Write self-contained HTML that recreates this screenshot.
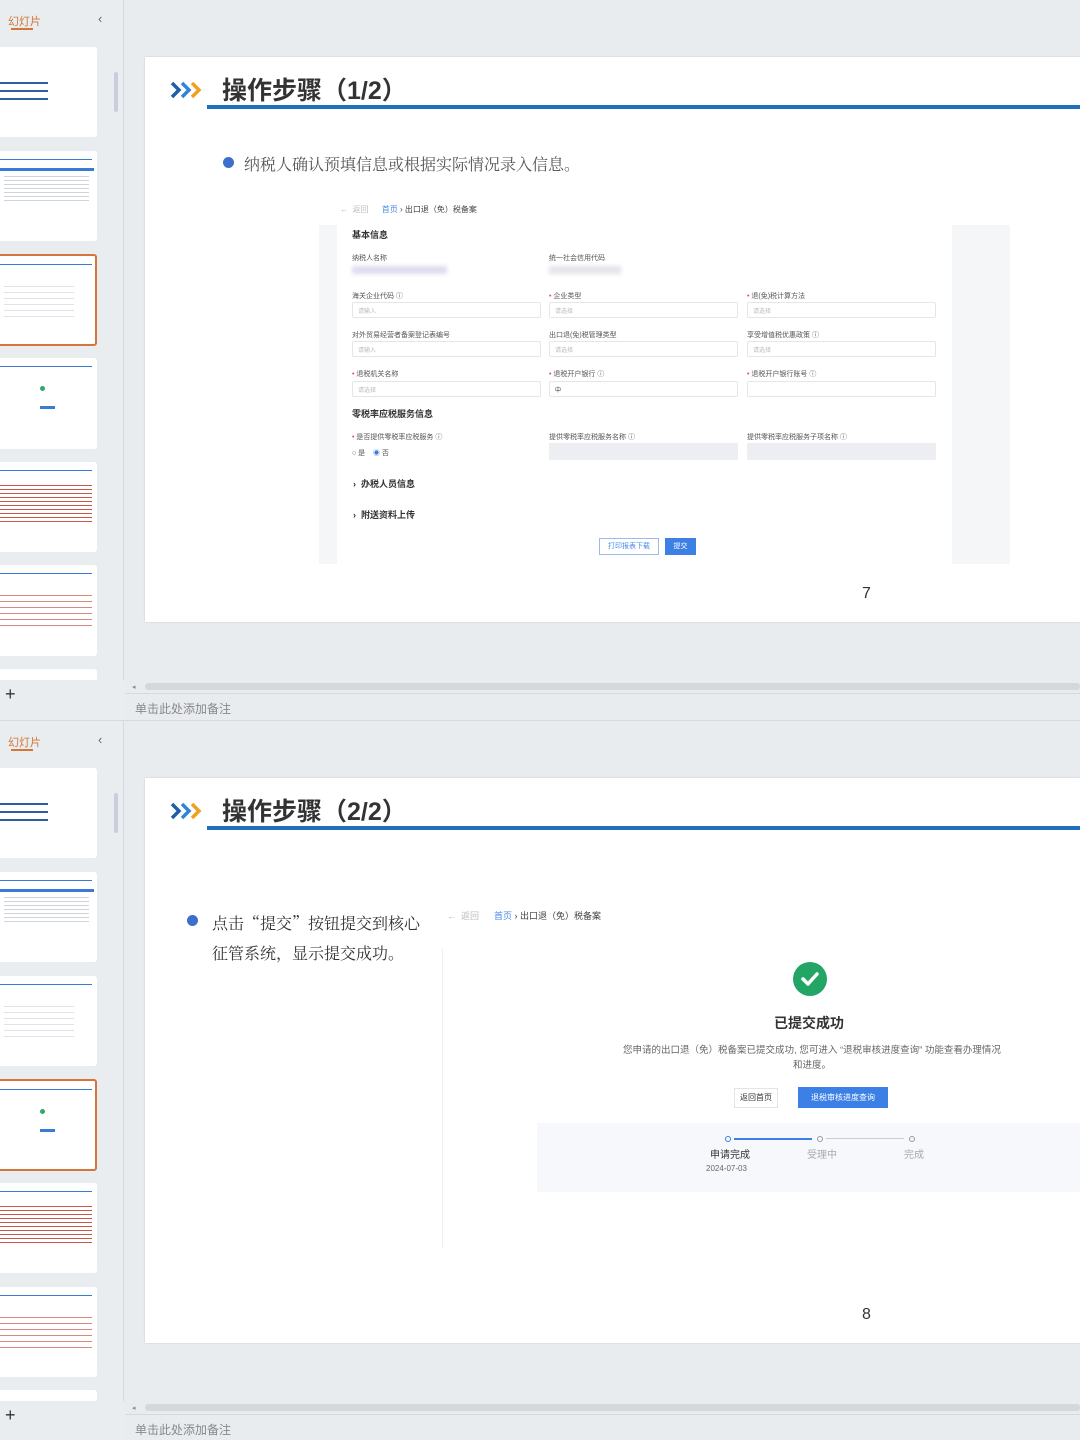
<!DOCTYPE html><html><head><meta charset="utf-8"><style>
*{margin:0;padding:0;box-sizing:border-box}
body{width:1080px;height:1440px;overflow:hidden;background:#e9ecef;font-family:"Liberation Sans","Noto Sans CJK SC",sans-serif;position:relative}
.a{position:absolute}
.pan{position:absolute;left:0;width:1080px;height:720px;overflow:hidden;background:#e9ecef}
.side{left:0;top:0;width:124px;height:720px;background:#e9edf0;border-right:1px solid #d6dadf}
.th{left:0;width:97px;background:#fff;border-radius:0 3px 3px 0}
.sel{border:2px solid #d4763a;border-left:none}
.slide{left:145px;top:57px;width:935px;height:565px;background:#fff;box-shadow:0 0 2px rgba(0,0,0,.15)}
.t{font-size:25px;font-weight:bold;color:#333;letter-spacing:0}
.bar{left:62px;top:48px;width:873px;height:4px;background:#1f6fbd}
.lbl{font-size:7px;color:#555}
.inp{height:16px;border:1px solid #e4e6ea;border-radius:2px;font-size:6px;color:#bbb;padding:3px 5px}
.g{font-size:12px;color:#888}
</style></head><body>

<!-- PANEL 1 -->
<div class="pan" style="top:0">
 <div class="a side">
  <div class="a" style="left:8px;top:13px;font-size:11px;color:#d4763a">幻灯片</div>
  <div class="a" style="left:11px;top:28px;width:22px;height:2px;background:#d4763a"></div>
  <div class="a" style="left:98px;top:11px;font-size:13px;color:#666">‹</div>
  <div class="a" style="left:114px;top:72px;width:4px;height:40px;background:#ccd;border-radius:2px"></div>
  <div class="a th" style="top:47px;height:90px"><div class="a" style="left:0;top:32px;width:48px;height:24px;background:repeating-linear-gradient(#fff 0 3px,#2e5f9a 3px 5px,#fff 5px 8px)"></div></div>
  <div class="a th" style="top:151px;height:90px"><div class="a" style="left:0;top:8px;width:92px;height:1px;background:#3a7bd5"></div><div class="a" style="left:0;top:17px;width:94px;height:3px;background:#3a7bd5"></div><div class="a" style="left:4px;top:22px;width:85px;height:30px;background:repeating-linear-gradient(#fff 0 3px,#d0d5dc 3px 4px)"></div></div>
  <div class="a th sel" style="top:254px;height:92px"><div class="a" style="left:0;top:8px;width:92px;height:1px;background:#3a7bd5"></div><div class="a" style="left:4px;top:25px;width:70px;height:40px;background:repeating-linear-gradient(#fff 0 5px,#e0e3e8 5px 6px)"></div></div>
  <div class="a th" style="top:358px;height:91px"><div class="a" style="left:0;top:8px;width:92px;height:1px;background:#3a7bd5"></div><div class="a" style="left:40px;top:28px;width:5px;height:5px;border-radius:50%;background:#2eaa6a"></div><div class="a" style="left:40px;top:48px;width:15px;height:3px;background:#3a7bd5"></div></div>
  <div class="a th" style="top:462px;height:90px"><div class="a" style="left:0;top:8px;width:92px;height:1px;background:#3a7bd5"></div><div class="a" style="left:0;top:20px;width:92px;height:40px;background:repeating-linear-gradient(#fff 0 3px,#c75a4a 3px 4px)"></div></div>
  <div class="a th" style="top:565px;height:91px"><div class="a" style="left:0;top:8px;width:92px;height:1px;background:#3a7bd5"></div><div class="a" style="left:0;top:25px;width:92px;height:40px;background:repeating-linear-gradient(#fff 0 5px,#d98a80 5px 6px)"></div></div>
  <div class="a th" style="top:669px;height:12px"></div>
  <div class="a" style="left:0;top:680px;width:124px;height:40px;background:#e9edf0"></div>
  <div class="a" style="left:5px;top:684px;font-size:18px;color:#333">+</div>
 </div>
 <div class="a slide">
  <svg class="a" style="left:25px;top:23px" width="36" height="20"><path d="M2 3l7 7-7 7" stroke="#1f5fa8" stroke-width="3.5" fill="none"/><path d="M12 3l7 7-7 7" stroke="#2f86d6" stroke-width="3.5" fill="none"/><path d="M22 3l7 7-7 7" stroke="#f0a020" stroke-width="3.5" fill="none"/></svg>
  <div class="a t" style="left:77px;top:14px">操作步骤（1/2）</div>
  <div class="a bar"></div>
  <div class="a" style="left:78px;top:100px;width:11px;height:11px;border-radius:50%;background:#3c6fcd"></div>
  <div class="a" style="left:99px;top:95px;font-size:16px;color:#555;font-family:'Noto Serif CJK SC',serif">纳税人确认预填信息或根据实际情况录入信息。</div>
  <div class="a" style="left:195px;top:147px;font-size:8px;color:#bbb">←&nbsp; 返回 &nbsp;&nbsp;&nbsp;&nbsp; <span style="color:#4a8ae8">首页</span> <span style="color:#444">› 出口退（免）税备案</span></div>
  <div class="a" style="left:174px;top:168px;width:691px;height:339px;background:#f5f6f8"></div>
  <div class="a" style="left:192px;top:168px;width:615px;height:339px;background:#fff"></div>
  <div class="a" style="left:207px;top:171px;font-size:9px;font-weight:bold;color:#333">基本信息</div>
  <div class="a lbl" style="left:207px;top:196px">纳税人名称</div><div class="a lbl" style="left:404px;top:196px">统一社会信用代码</div>
  <div class="a" style="left:207px;top:209px;width:95px;height:8px;background:#dde;filter:blur(2px)"></div>
  <div class="a" style="left:404px;top:209px;width:72px;height:8px;background:#e4e4ea;filter:blur(2px)"></div>
  <div class="a lbl" style="left:207px;top:234px">海关企业代码 ⓘ</div><div class="a lbl" style="left:404px;top:234px"><span style="color:#e44">•</span> 企业类型</div><div class="a lbl" style="left:602px;top:234px"><span style="color:#e44">•</span> 退(免)税计算方法</div>
  <div class="a inp" style="left:207px;top:245px;width:189px">请输入</div><div class="a inp" style="left:404px;top:245px;width:189px">请选择</div><div class="a inp" style="left:602px;top:245px;width:189px">请选择</div>
  <div class="a lbl" style="left:207px;top:273px">对外贸易经营者备案登记表编号</div><div class="a lbl" style="left:404px;top:273px">出口退(免)税管理类型</div><div class="a lbl" style="left:602px;top:273px">享受增值税优惠政策 ⓘ</div>
  <div class="a inp" style="left:207px;top:284px;width:189px">请输入</div><div class="a inp" style="left:404px;top:284px;width:189px">请选择</div><div class="a inp" style="left:602px;top:284px;width:189px">请选择</div>
  <div class="a lbl" style="left:207px;top:312px"><span style="color:#e44">•</span> 退税机关名称</div><div class="a lbl" style="left:404px;top:312px"><span style="color:#e44">•</span> 退税开户银行 ⓘ</div><div class="a lbl" style="left:602px;top:312px"><span style="color:#e44">•</span> 退税开户银行账号 ⓘ</div>
  <div class="a inp" style="left:207px;top:324px;width:189px">请选择</div><div class="a inp" style="left:404px;top:324px;width:189px;color:#333">中</div><div class="a inp" style="left:602px;top:324px;width:189px"></div>
  <div class="a" style="left:207px;top:350px;font-size:9px;font-weight:bold;color:#333">零税率应税服务信息</div>
  <div class="a lbl" style="left:207px;top:375px"><span style="color:#e44">•</span> 是否提供零税率应税服务 ⓘ</div><div class="a lbl" style="left:404px;top:375px">提供零税率应税服务名称 ⓘ</div><div class="a lbl" style="left:602px;top:375px">提供零税率应税服务子项名称 ⓘ</div>
  <div class="a lbl" style="left:207px;top:391px">○ 是 &nbsp;&nbsp; <span style="color:#3a7bd5">◉</span> 否</div>
  <div class="a" style="left:404px;top:386px;width:189px;height:17px;background:#eceef1"></div><div class="a" style="left:602px;top:386px;width:189px;height:17px;background:#eceef1"></div>
  <div class="a" style="left:208px;top:420px;font-size:9px;font-weight:bold;color:#333">› &nbsp;办税人员信息</div>
  <div class="a" style="left:208px;top:451px;font-size:9px;font-weight:bold;color:#333">› &nbsp;附送资料上传</div>
  <div class="a" style="left:454px;top:481px;width:60px;height:17px;border:1px solid #9bbbe8;font-size:7px;color:#4a8ae8;text-align:center;line-height:15px">打印报表下载</div>
  <div class="a" style="left:520px;top:481px;width:31px;height:17px;background:#3c80e6;font-size:7px;color:#fff;text-align:center;line-height:17px">提交</div>
  <div class="a" style="left:717px;top:528px;font-size:16px;color:#333">7</div>
 </div>
 <div class="a" style="left:132px;top:683px;font-size:7px;color:#888">◂</div>
 <div class="a" style="left:145px;top:683px;width:935px;height:7px;background:#d4d8dd;border-radius:3px"></div>
 <div class="a" style="left:125px;top:693px;width:955px;height:1px;background:#d6dadf"></div>
 <div class="a g" style="left:135px;top:700px">单击此处添加备注</div>
</div>

<!-- PANEL 2 -->
<div class="pan" style="top:720px;border-top:1px solid #d6dadf">
 <div class="a side">
  <div class="a" style="left:8px;top:13px;font-size:11px;color:#d4763a">幻灯片</div>
  <div class="a" style="left:11px;top:28px;width:22px;height:2px;background:#d4763a"></div>
  <div class="a" style="left:98px;top:11px;font-size:13px;color:#666">‹</div>
  <div class="a" style="left:114px;top:72px;width:4px;height:40px;background:#ccd;border-radius:2px"></div>
  <div class="a th" style="top:47px;height:90px"><div class="a" style="left:0;top:32px;width:48px;height:24px;background:repeating-linear-gradient(#fff 0 3px,#2e5f9a 3px 5px,#fff 5px 8px)"></div></div>
  <div class="a th" style="top:151px;height:90px"><div class="a" style="left:0;top:8px;width:92px;height:1px;background:#3a7bd5"></div><div class="a" style="left:0;top:17px;width:94px;height:3px;background:#3a7bd5"></div><div class="a" style="left:4px;top:22px;width:85px;height:30px;background:repeating-linear-gradient(#fff 0 3px,#d0d5dc 3px 4px)"></div></div>
  <div class="a th" style="top:255px;height:90px"><div class="a" style="left:0;top:8px;width:92px;height:1px;background:#3a7bd5"></div><div class="a" style="left:4px;top:25px;width:70px;height:40px;background:repeating-linear-gradient(#fff 0 5px,#e0e3e8 5px 6px)"></div></div>
  <div class="a th sel" style="top:358px;height:92px"><div class="a" style="left:0;top:8px;width:92px;height:1px;background:#3a7bd5"></div><div class="a" style="left:40px;top:28px;width:5px;height:5px;border-radius:50%;background:#2eaa6a"></div><div class="a" style="left:40px;top:48px;width:15px;height:3px;background:#3a7bd5"></div></div>
  <div class="a th" style="top:462px;height:90px"><div class="a" style="left:0;top:8px;width:92px;height:1px;background:#3a7bd5"></div><div class="a" style="left:0;top:20px;width:92px;height:40px;background:repeating-linear-gradient(#fff 0 3px,#c75a4a 3px 4px)"></div></div>
  <div class="a th" style="top:566px;height:90px"><div class="a" style="left:0;top:8px;width:92px;height:1px;background:#3a7bd5"></div><div class="a" style="left:0;top:25px;width:92px;height:40px;background:repeating-linear-gradient(#fff 0 5px,#d98a80 5px 6px)"></div></div>
  <div class="a th" style="top:669px;height:12px"></div>
  <div class="a" style="left:0;top:680px;width:124px;height:40px;background:#e9edf0"></div>
  <div class="a" style="left:5px;top:684px;font-size:18px;color:#333">+</div>
 </div>
 <div class="a slide">
  <svg class="a" style="left:25px;top:23px" width="36" height="20"><path d="M2 3l7 7-7 7" stroke="#1f5fa8" stroke-width="3.5" fill="none"/><path d="M12 3l7 7-7 7" stroke="#2f86d6" stroke-width="3.5" fill="none"/><path d="M22 3l7 7-7 7" stroke="#f0a020" stroke-width="3.5" fill="none"/></svg>
  <div class="a t" style="left:77px;top:14px">操作步骤（2/2）</div>
  <div class="a bar"></div>
  <div class="a" style="left:42px;top:137px;width:11px;height:11px;border-radius:50%;background:#3c6fcd"></div>
  <div class="a" style="left:67px;top:130px;width:220px;font-size:16px;line-height:30px;color:#333;font-family:'Noto Serif CJK SC',serif">点击“提交”按钮提交到核心征管系统，显示提交成功。</div>
  <div class="a" style="left:297px;top:170px;width:1px;height:300px;background:#f0f0f2"></div>
  <div class="a" style="left:302px;top:131px;font-size:9px;color:#bbb">←&nbsp; 返回 &nbsp;&nbsp;&nbsp;&nbsp; <span style="color:#4a8ae8">首页</span> <span style="color:#444">› 出口退（免）税备案</span></div>
  <div class="a" style="left:648px;top:184px;width:34px;height:34px;border-radius:50%;background:#22a565"><svg width="34" height="34"><path d="M10 17l5 5 9-10" stroke="#fff" stroke-width="3.5" fill="none" stroke-linecap="round" stroke-linejoin="round"/></svg></div>
  <div class="a" style="left:629px;top:235px;font-size:14px;font-weight:bold;color:#333">已提交成功</div>
  <div class="a" style="left:457px;top:265px;width:420px;font-size:9.5px;line-height:15px;color:#666;text-align:center">您申请的出口退（免）税备案已提交成功, 您可进入 “退税审核进度查询” 功能查看办理情况<br>和进度。</div>
  <div class="a" style="left:589px;top:310px;width:44px;height:20px;border:1px solid #e4e4e8;font-size:8px;color:#333;text-align:center;line-height:18px">返回首页</div>
  <div class="a" style="left:653px;top:309px;width:90px;height:21px;background:#3c80e6;font-size:8px;color:#fff;text-align:center;line-height:21px">退税审核进度查询</div>
  <div class="a" style="left:392px;top:345px;width:543px;height:69px;background:#f6f8fb"></div>
  <div class="a" style="left:580px;top:358px;width:6px;height:6px;border-radius:50%;border:1px solid #3c80e6"></div>
  <div class="a" style="left:589px;top:360px;width:78px;height:2px;background:#3c80e6"></div>
  <div class="a" style="left:672px;top:358px;width:6px;height:6px;border-radius:50%;border:1px solid #999"></div>
  <div class="a" style="left:681px;top:360px;width:78px;height:1px;background:#ccc"></div>
  <div class="a" style="left:764px;top:358px;width:6px;height:6px;border-radius:50%;border:1px solid #999"></div>
  <div class="a" style="left:565px;top:368px;font-size:10px;color:#333">申请完成</div>
  <div class="a" style="left:662px;top:368px;font-size:10px;color:#aaa">受理中</div>
  <div class="a" style="left:759px;top:368px;font-size:10px;color:#aaa">完成</div>
  <div class="a" style="left:561px;top:386px;font-size:8px;color:#666">2024-07-03</div>
  <div class="a" style="left:717px;top:528px;font-size:16px;color:#333">8</div>
 </div>
 <div class="a" style="left:132px;top:683px;font-size:7px;color:#888">◂</div>
 <div class="a" style="left:145px;top:683px;width:935px;height:7px;background:#d4d8dd;border-radius:3px"></div>
 <div class="a" style="left:125px;top:693px;width:955px;height:1px;background:#d6dadf"></div>
 <div class="a g" style="left:135px;top:700px">单击此处添加备注</div>
</div>
</body></html>
